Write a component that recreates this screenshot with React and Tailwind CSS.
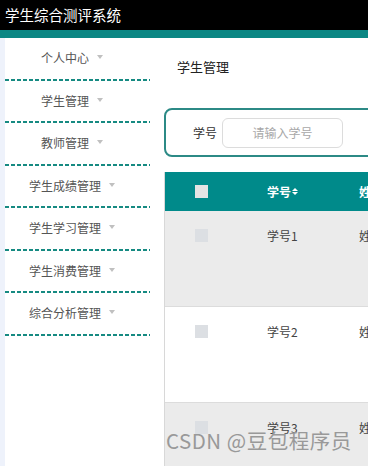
import React from "react";

const menus = ["个人中心", "学生管理", "教师管理", "学生成绩管理", "学生学习管理", "学生消费管理", "综合分析管理"];
const rows = [
  { id: "学号1", bg: "bg-[#ebebeb]" },
  { id: "学号2", bg: "bg-white" },
  { id: "学号3", bg: "bg-[#ebebeb]" },
];

export default function App() {
  return (
    <div
      className="relative w-[368px] h-[466px] overflow-hidden bg-white flex flex-col"
      style={{ fontFamily: '"Noto Sans CJK SC", "Liberation Sans", sans-serif' }}
    >
      <div className="h-[30px] bg-black flex items-center pl-[5px] shrink-0">
        <span className="text-white text-[14.5px] leading-none">学生综合测评系统</span>
      </div>
      <div className="h-[8px] bg-[#0b8784] shrink-0" />
      <div className="flex flex-1 min-h-0 overflow-hidden">
        <div className="w-[5px] bg-[#eef2fb] shrink-0" />
        <div className="w-[158px] shrink-0 bg-white">
          {menus.map((m) => (
            <div key={m} className="w-[145px]">
              <div className="h-[40.5px] w-[134px] flex items-center justify-center gap-[8px]">
                <span className="text-[12px] text-[#555] leading-none">{m}</span>
                <span className="w-0 h-0 border-l-[3px] border-r-[3px] border-t-[4px] border-l-transparent border-r-transparent border-t-[#c0c0c0] mb-[2px]" />
              </div>
              <div className="h-[2px] w-[145px] bg-[repeating-linear-gradient(90deg,#168a82_0_4px,transparent_4px_6px)]" />
            </div>
          ))}
        </div>
        <div className="flex-1 min-w-0 pl-[1px] flex flex-col">
          <div className="shrink-0 pt-[21px] pl-[13px] text-[13px] leading-[16px] text-[#222]">学生管理</div>
          <div className="shrink-0 mt-[33px] h-[49px] w-[230px] border-2 border-[#2c8a86] rounded-[8px] flex items-center pl-[27px] gap-[5px]">
            <span className="text-[12px] text-[#333] leading-none">学号</span>
            <div className="w-[121px] h-[30px] rounded-[6px] border border-[#dcdcdc] flex items-center justify-center">
              <span className="text-[12px] text-[#a8a8a8] leading-none">请输入学号</span>
            </div>
          </div>
          <div className="shrink-0 mt-[15px] w-[260px] border-l border-[#d8d8d8]">
            <div className="h-[39px] bg-[#008a8a] flex items-center">
              <div className="w-[72px] flex justify-center">
                <div className="w-[13px] h-[13px] bg-[#e4e4e4]" />
              </div>
              <div className="w-[92px] pl-[30px] flex items-center">
                <span className="text-[12px] text-white font-bold leading-none">学号</span>
                <span className="flex flex-col ml-[1px] gap-[1px]">
                  <span className="w-0 h-0 border-l-[3px] border-r-[3px] border-b-[3px] border-l-transparent border-r-transparent border-b-white" />
                  <span className="w-0 h-0 border-l-[3px] border-r-[3px] border-t-[3px] border-l-transparent border-r-transparent border-t-white" />
                </span>
              </div>
              <div className="pl-[30px] text-[12px] leading-none text-white font-bold whitespace-nowrap">姓名</div>
            </div>
            {rows.map((r) => (
              <div key={r.id} className={`h-[96px] ${r.bg} border-b border-[#dcdcdc] flex items-start pt-[18px]`}>
                <div className="w-[72px] flex justify-center">
                  <div className="w-[13px] h-[13px] bg-[#dcdfe3]" />
                </div>
                <div className="w-[92px] pl-[30px] text-[12px] leading-[13px] text-[#444]">{r.id}</div>
                <div className="pl-[30px] text-[12px] leading-[13px] text-[#444] whitespace-nowrap">姓名</div>
              </div>
            ))}
          </div>
        </div>
      </div>
      <div className="absolute left-[166px] top-[430px] text-[20.5px] text-[#999] leading-none tracking-[0.5px] whitespace-nowrap">
        CSDN @豆包程序员
      </div>
    </div>
  );
}
